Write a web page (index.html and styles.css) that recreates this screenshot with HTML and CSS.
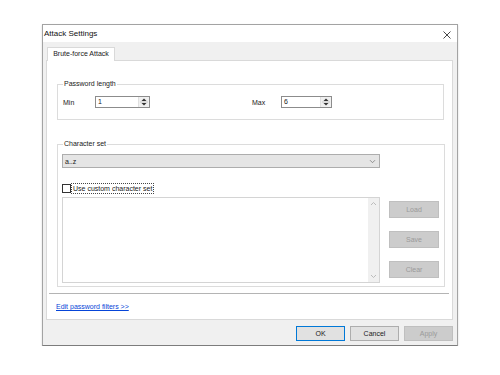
FILE: index.html
```html
<!DOCTYPE html>
<html lang="en">
<head>
    <meta charset="UTF-8">
    <title>Attack Settings</title>
    <link rel="stylesheet" href="styles.css">
</head>
<body>

    <div class="dialog">
        <div class="titlebar">
            <span class="title">Attack Settings</span>
            <svg class="close" width="8" height="8" viewBox="0 0 8 8">
                <path d="M0.5 0.5 L7.5 7.5 M7.5 0.5 L0.5 7.5" stroke="#333" stroke-width="0.9" fill="none"/>
            </svg>
        </div>

        <div class="client">
            <div class="tabs">
                <div class="tab">Brute-force Attack</div>
            </div>

            <div class="panel">
                <fieldset class="group group-length">
                    <legend>Password length</legend>
                    <div class="length-row">
                        <span class="lbl lbl-min">Min</span>
                        <div class="spin spin-min">
                            <span class="spin-value">1</span>
                            <span class="spin-btns">
                                <svg width="10" height="10" viewBox="0 0 10 10">
                                    <path d="M5 1.5 L7.5 4 L2.5 4 Z" fill="#333"/>
                                    <line x1="1" y1="5" x2="9" y2="5" stroke="#c8c8c8" stroke-width="1"/>
                                    <path d="M5 8.5 L7.5 6 L2.5 6 Z" fill="#333"/>
                                </svg>
                            </span>
                        </div>
                        <span class="lbl lbl-max">Max</span>
                        <div class="spin spin-max">
                            <span class="spin-value">6</span>
                            <span class="spin-btns">
                                <svg width="10" height="10" viewBox="0 0 10 10">
                                    <path d="M5 1.5 L7.5 4 L2.5 4 Z" fill="#333"/>
                                    <line x1="1" y1="5" x2="9" y2="5" stroke="#c8c8c8" stroke-width="1"/>
                                    <path d="M5 8.5 L7.5 6 L2.5 6 Z" fill="#333"/>
                                </svg>
                            </span>
                        </div>
                    </div>
                </fieldset>

                <fieldset class="group group-charset">
                    <legend>Character set</legend>
                    <div class="combo">
                        <span>a..z</span>
                        <svg width="7" height="5" viewBox="0 0 7 5">
                            <path d="M1 1.2 L3.5 3.7 L6 1.2" stroke="#7a7a7a" stroke-width="0.8" fill="none"/>
                        </svg>
                    </div>
                    <div class="check">
                        <span class="box"></span>
                        <span class="check-text">Use custom character set</span>
                    </div>
                    <div class="custom-row">
                        <div class="memo">
                            <div class="memo-scroll">
                                <svg width="7" height="6" viewBox="0 0 7 6">
                                    <path d="M1 4 L3.5 1.5 L6 4" stroke="#b5b5b5" stroke-width="0.9" fill="none"/>
                                </svg>
                                <svg width="7" height="6" viewBox="0 0 7 6">
                                    <path d="M1 2 L3.5 4.5 L6 2" stroke="#b5b5b5" stroke-width="0.9" fill="none"/>
                                </svg>
                            </div>
                        </div>
                        <div class="side-buttons">
                            <button class="btn btn-disabled">Load</button>
                            <button class="btn btn-disabled">Save</button>
                            <button class="btn btn-disabled">Clear</button>
                        </div>
                    </div>
                </fieldset>

                <div class="separator"></div>
                <a class="filters-link" href="#">Edit password filters &gt;&gt;</a>
            </div>

            <div class="footer">
                <button class="btn btn-default">OK</button>
                <button class="btn btn-cancel">Cancel</button>
                <button class="btn btn-disabled btn-apply">Apply</button>
            </div>
        </div>
    </div>

</body>
</html>
```

FILE: styles.css
```css
* {
    margin: 0;
    padding: 0;
    box-sizing: border-box;
}

body {
    font-family: 'Liberation Sans', Arial, sans-serif;
    font-size: 7px;
    color: #1a1a1a;
    background-color: #fff;
    padding: 24px 0 0 42px;
}

.dialog {
    width: 416px;
    height: 322px;
    border: 1px solid #a3a3a3;
    border-bottom-color: #7c7c7c;
    background: #f0f0f0;
    box-shadow: 0 1px 2px rgba(0, 0, 0, 0.15);
    display: flex;
    flex-direction: column;
}

/* Title bar */
.titlebar {
    height: 17px;
    background: #fff;
    display: flex;
    align-items: center;
    justify-content: space-between;
    padding: 0 6px 0 1px;
}

.title {
    font-size: 8px;
    color: #111;
}

.close {
    margin-top: 2px;
}

/* Client area */
.client {
    flex: 1;
    padding: 5px 4px 0 3px;
}

.tabs {
    display: flex;
    height: 13px;
    padding-left: 1px;
}

.tab {
    width: 68px;
    height: 14px;
    background: #fff;
    border: 1px solid #d9d9d9;
    border-bottom: none;
    text-align: center;
    line-height: 12px;
    position: relative;
    z-index: 1;
}

.panel {
    height: 260px;
    background: #fff;
    border: 1px solid #d9d9d9;
    padding: 19px 8px 0 10px;
}

/* Group boxes */
.group {
    border: 1px solid #dcdcdc;
    padding: 0 5px 0 4px;
}

.group legend {
    line-height: 8px;
    padding: 0 1px;
    margin-left: 1px;
    color: #222;
}

.group-length {
    padding-bottom: 11px;
}

.length-row {
    display: flex;
    align-items: center;
    margin-top: 8px;
    height: 12px;
}

.lbl {
    padding-left: 1px;
}

.lbl-min {
    width: 33px;
}

.lbl-max {
    width: 30px;
    margin-left: 101px;
}

.spin {
    height: 12px;
    border: 1px solid #8c8c8c;
    display: flex;
    justify-content: space-between;
    background: #fff;
}

.spin-min {
    width: 55px;
}

.spin-max {
    width: 51px;
}

.spin-value {
    padding-left: 2px;
    line-height: 10px;
}

.spin-btns {
    width: 11px;
    background: #f0f0f0;
    border-left: 1px solid #e0e0e0;
    display: flex;
    align-items: center;
    justify-content: center;
}

.group-charset {
    margin-top: 20px;
    padding-bottom: 3px;
}

.combo {
    margin-top: 6px;
    width: 318px;
    height: 14px;
    background: #e5e5e5;
    border: 1px solid #adadad;
    display: flex;
    align-items: center;
    justify-content: space-between;
    padding: 0 3px 0 2px;
}

.check {
    display: flex;
    align-items: center;
    margin-top: 15px;
    height: 11px;
}

.check .box {
    width: 9px;
    height: 9px;
    border: 1px solid #333;
    background: #fff;
}

.check-text {
    margin-left: 1px;
    padding: 0 1px;
    line-height: 9px;
    outline: 1px dotted #444;
}

.custom-row {
    display: flex;
    margin-top: 3px;
}

.memo {
    width: 318px;
    height: 86px;
    border: 1px solid #d4d4d4;
    display: flex;
    justify-content: flex-end;
}

.memo-scroll {
    width: 11px;
    background: #f0f0f0;
    display: flex;
    flex-direction: column;
    justify-content: space-between;
    align-items: center;
    padding: 3px 0;
}

.side-buttons {
    display: flex;
    flex-direction: column;
    gap: 13px;
    margin-left: 9px;
    padding-top: 4px;
}

/* Buttons */
.btn {
    font-family: inherit;
    font-size: 7px;
    height: 17px;
    width: 50px;
    background: #e1e1e1;
    border: 1px solid #adadad;
    color: #1a1a1a;
}

.btn-disabled {
    background: #cccccc;
    border-color: #bfbfbf;
    color: #9a9a9a;
}

.separator {
    margin: 6px 0 0 -8px;
    width: 400px;
    height: 1px;
    background: #b4b4b4;
}

.filters-link {
    display: inline-block;
    margin: 8px 0 0 -1px;
    line-height: 9px;
    color: #0645d8;
    text-decoration: underline;
}

/* Footer */
.footer {
    display: flex;
    justify-content: flex-end;
    gap: 5px;
    margin-top: 6px;
}

.footer .btn {
    height: 15px;
    width: 49px;
}

.btn-default {
    border-color: #0078d7;
}
```
